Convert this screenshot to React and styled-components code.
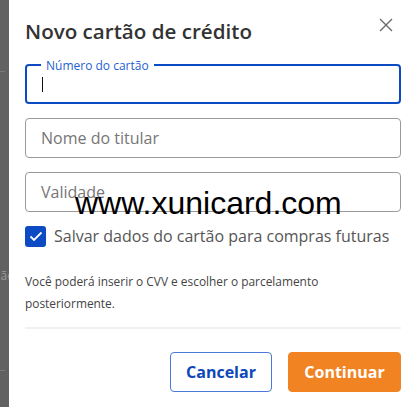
import React from "react";
import styled, { createGlobalStyle } from "styled-components";

const Global = createGlobalStyle`
  html, body { margin: 0; padding: 0; background: #fff; }
  body { font-family: "Open Sans", "Noto Sans", sans-serif; }
  * { box-sizing: border-box; }
`;

const Page = styled.div`
  position: relative;
  display: flex;
  width: 414px;
  height: 407px;
  overflow: hidden;
`;

const Backdrop = styled.div`
  width: 9px;
  flex: none;
  background: #616161;
  overflow: hidden;
  display: flex;
  flex-direction: column;
  align-items: flex-end;
`;

const BackdropDash = styled.div`
  width: 5px;
  height: 1px;
  background: #7a7a7a;
  margin-top: ${(p) => p.$mt}px;
  align-self: flex-start;
`;

const BackdropText = styled.span`
  font-size: 12px;
  line-height: 16px;
  color: #9a9a9a;
  white-space: nowrap;
  margin-top: ${(p) => p.$mt}px;
  margin-right: -4px;
`;

const Modal = styled.div`
  flex: 1;
  background: #fff;
  padding: 17px 13px 0 16px;
  display: flex;
  flex-direction: column;
`;

const Header = styled.div`
  display: flex;
  justify-content: space-between;
  align-items: flex-start;
`;

const Title = styled.h2`
  margin: 0;
  font-size: 20.6px;
  line-height: 28px;
  font-weight: 600;
  color: #333;
`;

const CloseButton = styled.button`
  width: 24px;
  height: 24px;
  margin: -4px 3px 0 0;
  padding: 0;
  border: 0;
  background: transparent;
  display: flex;
  align-items: center;
  justify-content: center;
`;

const Fields = styled.div`
  display: flex;
  flex-direction: column;
  gap: 14px;
  margin-top: 19px;
`;

const Field = styled.div`
  position: relative;
  height: 40px;
  border: ${(p) => (p.$active ? "2px solid #0d4bc4" : "1px solid #9a9a9a")};
  border-radius: 4px;
  display: flex;
  align-items: center;
  padding-left: 15px;
`;

const FloatLabel = styled.span`
  position: absolute;
  top: -8px;
  left: 14px;
  padding: 0 5px;
  background: #fff;
  font-size: 12px;
  line-height: 16px;
  color: #1f5fd1;
`;

const Caret = styled.span`
  width: 1px;
  height: 15px;
  background: #111;
`;

const Placeholder = styled.span`
  font-size: 16px;
  color: #767676;
`;

const CheckRow = styled.label`
  display: flex;
  align-items: center;
  gap: 8px;
  margin-top: 13px;
`;

const CheckBox = styled.span`
  width: 21px;
  height: 21px;
  border-radius: 3px;
  background: #0d4bc4;
  display: flex;
  align-items: center;
  justify-content: center;
`;

const CheckLabel = styled.span`
  font-size: 16px;
  color: #555;
  line-height: 22px;
`;

const Note = styled.p`
  margin: 23px 0 0;
  font-size: 11.9px;
  line-height: 22px;
  color: #444;
`;

const Divider = styled.hr`
  margin: 13px 0 0;
  border: 0;
  height: 2px;
  background: #f1f1f1;
`;

const Actions = styled.div`
  display: flex;
  justify-content: flex-end;
  gap: 16px;
  margin-top: 23px;
`;

const Button = styled.button`
  height: 40px;
  width: ${(p) => p.$w}px;
  border-radius: 4px;
  font-family: "Open Sans", sans-serif;
  font-size: 16px;
  font-weight: 700;
  border: 1px solid ${(p) => (p.$primary ? "#f28322" : "#4a7ad9")};
  background: ${(p) => (p.$primary ? "#f28322" : "#fff")};
  color: ${(p) => (p.$primary ? "#fff" : "#0d47b8")};
`;

const Watermark = styled.div`
  position: absolute;
  left: 75px;
  top: 185px;
  font-family: "Liberation Sans", Arial, sans-serif;
  font-size: 32px;
  line-height: 36px;
  color: #000;
  pointer-events: none;
`;

export default function App() {
  return (
    <>
      <Global />
      <Page>
        <Backdrop>
          <BackdropDash $mt={71} />
          <BackdropText $mt={196}>ãc</BackdropText>
          <BackdropDash $mt={86} />
        </Backdrop>
        <Modal>
          <Header>
            <Title>Novo cartão de crédito</Title>
            <CloseButton aria-label="Fechar">
              <svg width="14" height="14" viewBox="0 0 14 14">
                <path d="M1 1L13 13M13 1L1 13" stroke="#6b6b6b" strokeWidth="1.4" fill="none" />
              </svg>
            </CloseButton>
          </Header>
          <Fields>
            <Field $active>
              <FloatLabel>Número do cartão</FloatLabel>
              <Caret />
            </Field>
            <Field>
              <Placeholder>Nome do titular</Placeholder>
            </Field>
            <Field>
              <Placeholder>Validade</Placeholder>
            </Field>
          </Fields>
          <CheckRow>
            <CheckBox>
              <svg width="14" height="11" viewBox="0 0 14 11">
                <path d="M1.5 5.5L5 9L12.5 1.5" stroke="#fff" strokeWidth="1.8" fill="none" />
              </svg>
            </CheckBox>
            <CheckLabel>Salvar dados do cartão para compras futuras</CheckLabel>
          </CheckRow>
          <Note>
            Você poderá inserir o CVV e escolher o parcelamento posteriormente.
          </Note>
          <Divider />
          <Actions>
            <Button $w={102}>Cancelar</Button>
            <Button $w={113} $primary>Continuar</Button>
          </Actions>
        </Modal>
        <Watermark>www.xunicard.com</Watermark>
      </Page>
    </>
  );
}
